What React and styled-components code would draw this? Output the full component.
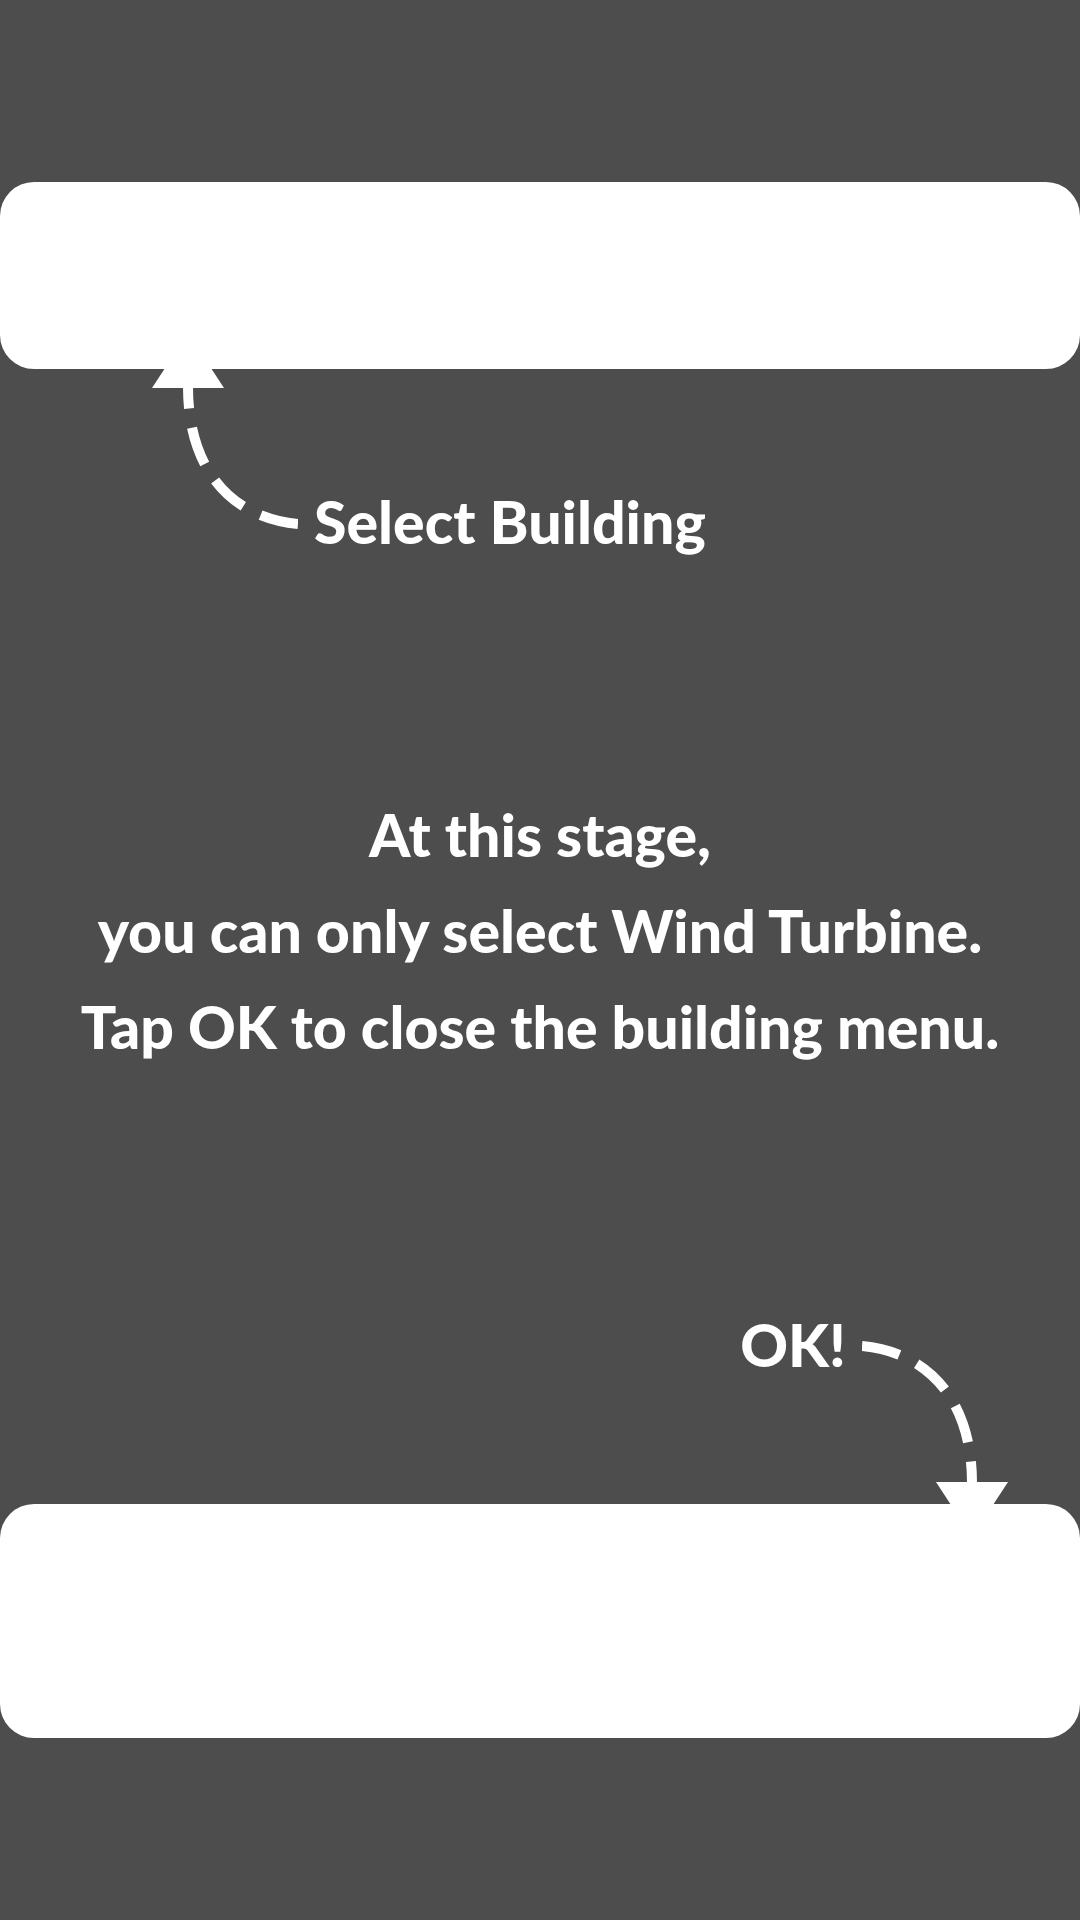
import React from "react";
import styled, { createGlobalStyle } from "styled-components";

const GlobalStyle = createGlobalStyle`
  *, *::before, *::after { box-sizing: border-box; }
  body { margin: 0; background: #4d4d4d; }
`;

const Screen = styled.div`
  display: flex;
  flex-direction: column;
  min-height: 100vh;
  padding: 182px 0;
  background: #4d4d4d;
  color: #fff;
  font-family: Lato, "Open Sans", sans-serif;
  font-size: 59px;
  font-weight: 900;
`;

const Panel = styled.section`
  height: ${({ $height }) => $height}px;
  border-radius: 34px;
  background: #fff;
`;

const Guide = styled.main`
  flex: 1;
  display: flex;
  flex-direction: column;
  justify-content: space-between;
`;

const Hint = styled.div`
  display: flex;
  align-items: ${({ $end }) => ($end ? "flex-start" : "flex-end")};
  justify-content: ${({ $end }) => ($end ? "flex-end" : "flex-start")};
  gap: 16px;
  padding: ${({ $end }) => ($end ? "0 72px 0 0" : "0 0 0 152px")};
`;

const HintLabel = styled.p`
  margin: 0;
  line-height: 60px;
`;

const Arrow = styled.svg`
  display: block;
  flex: none;
  margin: ${({ $down }) => ($down ? "24px 0 0" : "-3px 0 21px")};
  transform: ${({ $down }) => ($down ? "rotate(180deg)" : "none")};
`;

const Message = styled.p`
  margin: 0;
  padding-bottom: 6px;
  line-height: 96px;
  text-align: center;
`;

function CurvedArrow({ down = false }) {
  return (
    <Arrow $down={down} width="146" height="165" viewBox="0 0 146 165" aria-hidden="true">
      <path
        d="M146 158C80 152 36 104 36 21"
        fill="none"
        stroke="#fff"
        strokeWidth="10"
        strokeDasharray="38.5 19.5"
      />
      <path d="M0 22L36 -33L72 22Z" fill="#fff" />
    </Arrow>
  );
}

export default function App() {
  return (
    <>
      <GlobalStyle />
      <Screen>
        <Panel $height={187} />
        <Guide>
          <Hint>
            <CurvedArrow />
            <HintLabel>Select Building</HintLabel>
          </Hint>
          <Message>
            At this stage,
            <br />
            you can only select Wind Turbine.
            <br />
            Tap OK to close the building menu.
          </Message>
          <Hint $end>
            <HintLabel>OK!</HintLabel>
            <CurvedArrow down />
          </Hint>
        </Guide>
        <Panel $height={234} />
      </Screen>
    </>
  );
}
